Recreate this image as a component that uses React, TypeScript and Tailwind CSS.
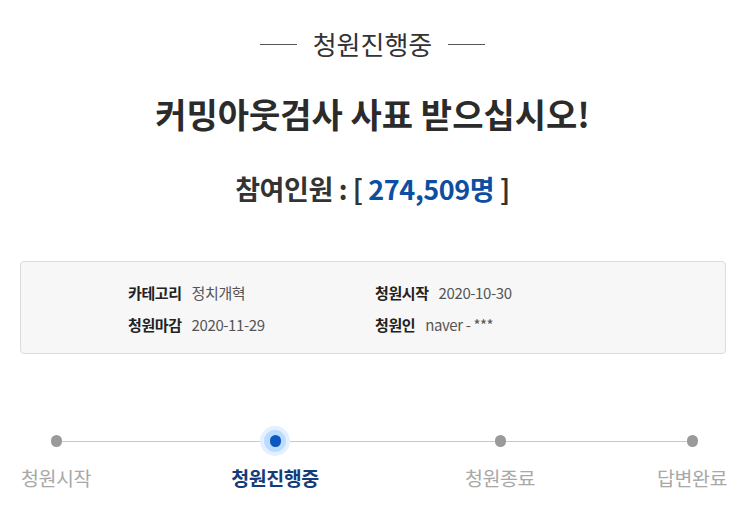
export default function App() {
  const steps = [
    { label: '청원시작', ml: 'ml-[11px]', active: false },
    { label: '청원진행중', ml: 'ml-[129px]', active: true },
    { label: '청원종료', ml: 'ml-[135px]', active: false },
    { label: '답변완료', ml: 'ml-[102px]', active: false },
  ]

  return (
    <main
      className="h-[511px] w-[745px] overflow-hidden bg-white text-[#333]"
      style={{ fontFamily: '"Noto Sans CJK KR", "Noto Sans", sans-serif' }}
    >
      <div className="flex items-center justify-center gap-[16px] pt-[27px]">
        <span className="h-px w-[37px] bg-[#555]" />
        <h3 className="text-[26px] leading-[34px] font-normal text-[#333]">청원진행중</h3>
        <span className="h-px w-[37px] bg-[#555]" />
      </div>

      <h1 className="mt-[30px] text-center text-[34px] leading-[46px] font-bold text-[#2b2b2b]">
        커밍아웃검사 사표 받으십시오!
      </h1>

      <h2 className="mt-[33px] text-center text-[27px] leading-[38px] font-bold tracking-[-0.4px] text-[#333]">
        참여인원 : [ <span className="text-[#0b4ea2]">274,509명</span> ]
      </h2>

      <div className="mx-[20px] mt-[53px] h-[93px] w-[706px] rounded-[4px] border border-[#dcdcdc] bg-[#f7f7f7] px-[107px] pt-[20px] text-[15px] tracking-[-0.4px]">
        <div className="grid grid-cols-[247px_1fr] gap-y-[10px] leading-[22px]">
          <div className="flex gap-[10px]">
            <span className="font-bold text-[#222]">카테고리</span>
            <span className="text-[#555]">정치개혁</span>
          </div>
          <div className="flex gap-[10px]">
            <span className="font-bold text-[#222]">청원시작</span>
            <span className="text-[#555]">2020-10-30</span>
          </div>
          <div className="flex gap-[10px]">
            <span className="font-bold text-[#222]">청원마감</span>
            <span className="text-[#555]">2020-11-29</span>
          </div>
          <div className="flex gap-[10px]">
            <span className="font-bold text-[#222]">청원인</span>
            <span className="text-[#555]">naver - ***</span>
          </div>
        </div>
      </div>

      <div className="relative mt-[72px]">
        <div className="absolute left-[55px] top-[15px] h-px w-[636px] bg-[#c8c8c8]" />
        <div className="relative flex">
          {steps.map((s) => (
            <div key={s.label} className={`${s.ml} flex w-[90px] flex-col items-center`}>
              <div className="flex h-[30px] w-[30px] items-center justify-center">
                {s.active ? (
                  <div className="flex h-[30px] w-[30px] items-center justify-center rounded-full bg-[#e3f0ff]">
                    <div className="flex h-[22px] w-[22px] items-center justify-center rounded-full bg-[#bcdcff]">
                      <div className="h-[12px] w-[11px] rounded-full bg-[#0b56c0]" />
                    </div>
                  </div>
                ) : (
                  <div className="h-[12px] w-[11px] rounded-full bg-[#9a9a9a]" />
                )}
              </div>
              <span
                className={`mt-[8px] whitespace-nowrap text-[19.5px] leading-[28px] tracking-[-0.4px] ${
                  s.active ? 'font-bold text-[#153c7a]' : 'text-[#a8a8a8]'
                }`}
              >
                {s.label}
              </span>
            </div>
          ))}
        </div>
      </div>
    </main>
  )
}
